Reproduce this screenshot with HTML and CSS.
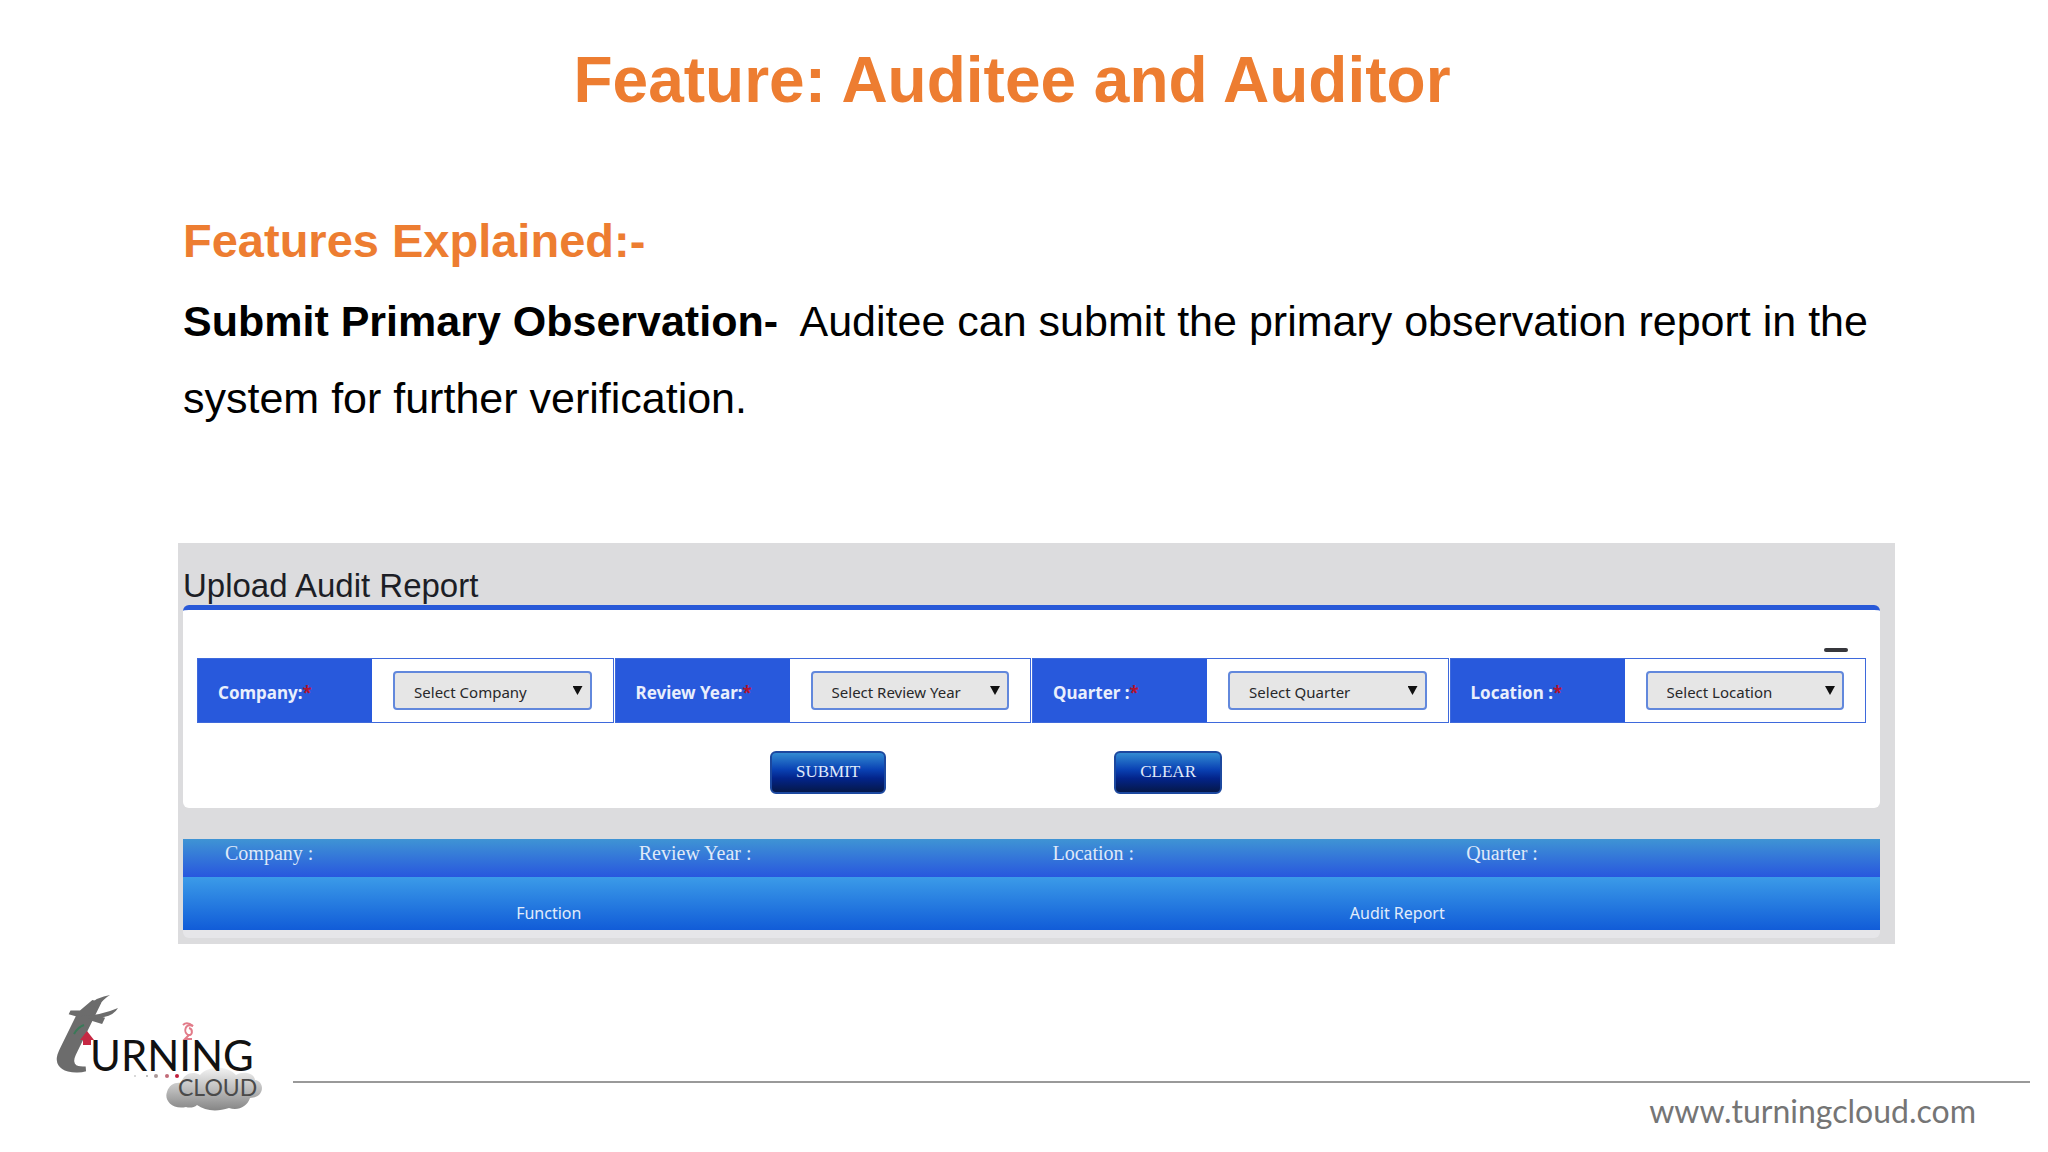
FILE: index.html
```html
<!DOCTYPE html>
<html lang="en">
<head>
<meta charset="utf-8">
<title>Feature: Auditee and Auditor</title>
<link rel="stylesheet" href="styles.css">
</head>
<body>
<div class="slide">
  <h1 class="slide-title">Feature: Auditee and Auditor</h1>
  <main class="content">
    <section class="intro">
      <h2 class="intro-title">Features Explained:-</h2>
      <p class="intro-text"><strong>Submit Primary Observation-</strong>&nbsp; Auditee can submit the primary observation report in the system for further verification.</p>
    </section>
    <section class="panel">
      <h3 class="panel-title">Upload Audit Report</h3>
      <form class="card">
        <button class="collapse" type="button" aria-label="Collapse"></button>
        <div class="fields">
          <div class="field">
            <label class="field-label" for="company">Company:<span class="required">*</span></label>
            <div class="field-control"><div class="picker"><select id="company"><option>Select Company</option></select></div></div>
          </div>
          <div class="field">
            <label class="field-label" for="year">Review Year:<span class="required">*</span></label>
            <div class="field-control"><div class="picker"><select id="year"><option>Select Review Year</option></select></div></div>
          </div>
          <div class="field">
            <label class="field-label" for="quarter">Quarter :<span class="required">*</span></label>
            <div class="field-control"><div class="picker"><select id="quarter"><option>Select Quarter</option></select></div></div>
          </div>
          <div class="field">
            <label class="field-label" for="location">Location :<span class="required">*</span></label>
            <div class="field-control"><div class="picker"><select id="location"><option>Select Location</option></select></div></div>
          </div>
        </div>
        <div class="actions">
          <button class="action" type="submit">SUBMIT</button>
          <button class="action" type="reset">CLEAR</button>
        </div>
      </form>
      <div class="results">
        <div class="summary">
          <span>Company :</span>
          <span>Review Year :</span>
          <span>Location :</span>
          <span>Quarter :</span>
        </div>
        <table class="reports">
          <thead><tr><th scope="col">Function</th><th scope="col">Audit Report</th></tr></thead>
        </table>
      </div>
    </section>
  </main>
  <footer class="footer">
    <svg class="logo" viewBox="0 0 240 136" role="img" aria-label="Turning Cloud">
      <defs>
        <linearGradient id="cloud" x1="0" y1="0" x2="0" y2="1">
          <stop offset="0" stop-color="#f2f2f2"/>
          <stop offset="0.5" stop-color="#bdbdbd"/>
          <stop offset="1" stop-color="#858585"/>
        </linearGradient>
      </defs>
      <path d="M156 127C141 130 134 119 137 112C139 105 145 102 151 103C154 93 163 91 170 95C176 87 196 84 206 95C212 91 224 92 225 100C235 101 235 118 220 118C217 127 208 131 199 128C187 132 175 131 167 125C164 128 159 128 156 127Z" fill="url(#cloud)"/>
      <text class="logo-t" transform="translate(20 85) rotate(16)">t</text>
      <path d="M52 36Q72 35 88 28Q84 35 74 37Q64 39 51 39Z" fill="#6c6c6c"/>
      <path d="M59 25Q67 17 80 15Q73 19 67 28Z" fill="#6c6c6c"/>
      <path d="M44 54Q48 47 54 45" stroke="#397a58" stroke-width="2" fill="none"/>
      <path d="M57 51L64 60H61V65H53V60H50Z" fill="#c62843"/>
      <text class="logo-name" x="60" y="91">URNING</text>
      <g fill="none" stroke="#e27b89" stroke-width="2">
        <path d="M163 46C155 43 153 52 158 55C163 56 163 49 159 48M159 55L155 59H162"/>
        <path d="M153 45Q157 41 163 46"/>
      </g>
      <circle cx="105" cy="96" r="1" fill="#ccc"/>
      <circle cx="117" cy="96" r="1" fill="#aaa"/>
      <circle cx="126" cy="96" r="2" fill="#a99"/>
      <circle cx="137" cy="96" r="2" fill="#c26b78"/>
      <circle cx="147" cy="96" r="2" fill="#c21f3c"/>
      <text class="logo-cloud" x="148" y="116">CLOUD</text>
    </svg>
    <div class="footer-main">
      <a class="site" href="#">www.turningcloud.com</a>
    </div>
  </footer>
</div>
</body>
</html>
```

FILE: styles.css
```css
* { box-sizing: border-box; }

body {
  margin: 0;
  background: #fff;
  color: #000;
  font-family: "Liberation Sans", Arial, sans-serif;
}

.slide {
  display: flex;
  flex-direction: column;
  min-height: 100vh;
}

h1, h2, h3, p { margin: 0; }

.slide-title {
  padding: 40px 24px 0 0;
  font-size: 64px;
  line-height: 80px;
  text-align: center;
  color: #ed7d31;
}

.content {
  flex: 1;
  padding: 93px 153px 0 178px;
}

.intro { padding: 0 5px; }

.intro-title {
  font-size: 47px;
  line-height: 56px;
  color: #ed7d31;
}

.intro-text {
  padding-top: 14px;
  font-size: 43px;
  line-height: 77px;
}

.panel {
  margin-top: 106px;
  padding: 24px 15px 6px 5px;
  background: #dcdcde;
}

.panel-title {
  font-size: 33px;
  font-weight: 400;
  line-height: 38px;
  color: #1c1e26;
}

.card {
  display: flex;
  flex-direction: column;
  padding: 38px 14px 14px;
  border-top: 5px solid #2859d8;
  border-radius: 6px;
  background: #fff;
}

.collapse {
  align-self: flex-end;
  width: 24px;
  height: 4px;
  margin: 0 18px 6px 0;
  padding: 0;
  border: 0;
  border-radius: 2px;
  background: #36373c;
}

.fields {
  display: grid;
  grid-template-columns: repeat(4, 1fr);
  gap: 1px;
}

.field {
  display: flex;
  height: 65px;
  border: 1px solid #3e69dc;
}

.field-label {
  flex: 0 0 42%;
  padding-left: 20px;
  background: #2859dc;
  color: #e9effc;
  font: 700 17px/68px "Noto Sans", sans-serif;
}

.required { color: #b3122e; }

.field-control {
  flex: 1;
  padding: 12px 21px;
}

.picker { position: relative; }

.picker::after {
  content: "";
  position: absolute;
  top: 15px;
  right: 9px;
  width: 10px;
  height: 9px;
  background: #111;
  clip-path: polygon(0 0, 100% 0, 50% 100%);
  pointer-events: none;
}

.picker select {
  display: block;
  width: 100%;
  height: 39px;
  padding: 2px 24px 0 19px;
  border: 2px solid #6288dc;
  border-radius: 4px;
  appearance: none;
  background: #e6e6e6;
  color: #28282a;
  font: 400 15px "Noto Sans", sans-serif;
}

.actions {
  display: flex;
  justify-content: center;
  gap: 228px;
  padding: 28px 71px 0 0;
}

.action {
  height: 43px;
  padding: 0 24px 1px;
  border: 2px solid #1c489f;
  border-radius: 6px;
  background: linear-gradient(#328bd2, #0a42b4 42%, #03248a 65%, #051849);
  color: #e1ebfa;
  font: 400 17px "Liberation Serif", serif;
}

.results {
  margin-top: 31px;
  padding-bottom: 8px;
  border-radius: 0 0 6px 6px;
  background: #e6e6e9;
}

.summary {
  display: grid;
  grid-template-columns: repeat(4, 1fr);
  height: 38px;
  padding: 0 0 0 42px;
  background: linear-gradient(#3f94d4, #2857de);
  color: #dfe9f9;
  font: 400 20px/29px "Liberation Serif", serif;
}

.reports {
  width: 100%;
  border-collapse: collapse;
  table-layout: fixed;
  background: linear-gradient(#3b9be8, #115cd8);
}

.reports th {
  height: 53px;
  padding: 18px 117px 0 0;
  color: #e1ecfb;
  font: 400 16px/20px "Noto Sans", sans-serif;
}

.footer {
  display: flex;
  padding: 0 18px 0 30px;
}

.logo {
  flex: none;
  width: 240px;
  height: 136px;
  margin: 0 23px 36px 0;
}

.logo-t {
  fill: #6c6c6c;
  font: italic 700 132px "Liberation Serif", serif;
}

.logo-name {
  fill: #111;
  font: 400 42px Lato, sans-serif;
}

.logo-cloud {
  fill: #4a4a4a;
  font: 400 23px Lato, sans-serif;
}

.footer-main {
  flex: 1;
  align-self: flex-end;
  padding: 8px 54px 21px 0;
  border-top: 2px solid #999;
  text-align: right;
}

.site {
  color: #757575;
  font: 400 32px/40px Lato, sans-serif;
  text-decoration: none;
}
```
